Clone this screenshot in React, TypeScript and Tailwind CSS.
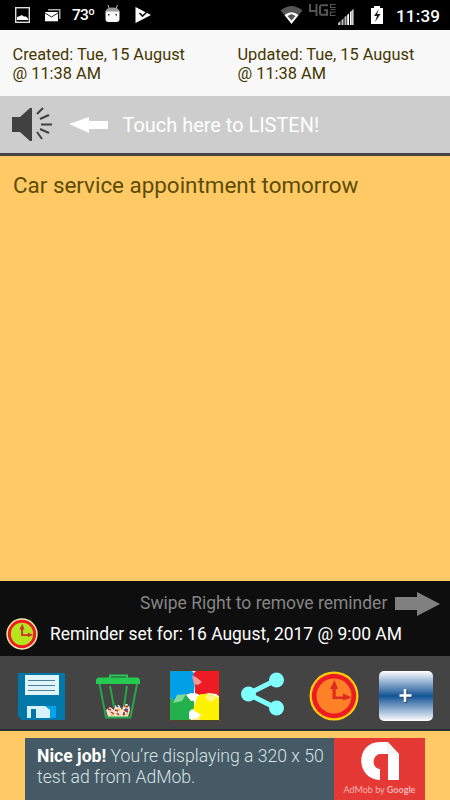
import type { ReactNode } from "react";

function StatusBar() {
  return (
    <header className="h-[30px] bg-black flex items-center text-white">
      <svg className="ml-[14px]" width="48" height="30" viewBox="14 0 48 30" fill="none">
        <rect x="15.700" y="7.700" width="13.600" height="14.600" stroke="#ddd" strokeWidth="1.400" />
        <path d="M17 20v-3l3-1 1.500-1 2.500 1.500 2 0 2 2v1.500z" fill="#fff" />
        <path d="M48 9h12.500v10H59v-8.500H48z" fill="#aaa" />
        <path d="M45 12h13v9.300H45z" fill="#fff" />
        <path d="m45 13 6.500 4 6.500-4" stroke="#222" strokeWidth="1" />
      </svg>
      <span className="ml-[10px] pt-px w-[32px] text-[15.5px] leading-[29px] font-medium tracking-[-0.8px]">73º</span>
      <svg width="50" height="30" viewBox="104 0 50 30">
        <path d="m108 5 1.500 4m8-4-1.500 4" stroke="#bbb" strokeWidth="1" />
        <path d="M105.500 12q0-4.500 7-4.500t7 4.500z" fill="#999" />
        <path d="M105.500 11.500h14V19q0 3-3 3h-8q-3 0-3-3z" fill="#f8f8f8" />
        <path d="M108 14h1.500v1.500H108zm7.500 0h1.500v1.500h-1.500z" fill="#333" />
        <path d="m135.500 7 15.500 8-15.500 8z" fill="#fff" />
        <path d="m139.500 13 3 3 6.500-6" fill="none" stroke="#111" strokeWidth="1.700" />
      </svg>
      <svg className="ml-[126px]" width="108" height="30" viewBox="280 0 108 30">
        <path d="M280.500 10.500q11-9 22 0l-11 13z" fill="#555" />
        <path d="M284.500 15q7-5.500 14 0l-7 9z" fill="#fff" />
        <path d="m287.500 16 4-2 4 2-4 4.500z" fill="#555" />
        <path d="M310 4v7h7.500M316.500 4v12M328 5.200h-6.500q-1.500 0-1.500 1.500v6.500q0 1.500 1.500 1.500h5.500v-4.500h-3" fill="none" stroke="#555" strokeWidth="2" />
        <path d="M330.500 4v3.500h5M330.500 9.500h5M335.500 12h-5v3.500h5M330 4.500h5.500" fill="none" stroke="#555" strokeWidth="1.200" />
        <path d="M338 25v-2l2.500-2v4zm3.500 0v-5l2-1.500V25zm3 0v-8l2-1.500V25z" fill="#bbb" />
        <path d="M347.200 25V15l1.800-1.500V25zm2.800 0V12l1.700-1.500V25zm2.200 0V10l1.300-1v16z" fill="#fff" />
        <path d="M371 8h3V6h6v2h3v16h-12z" fill="#fff" />
        <path d="m379 9-5 7h3l-2 6 5.500-8H377z" fill="#111" />
      </svg>
      <span className="ml-[8px] pt-px text-[17px] font-medium leading-[30px] tracking-[0.2px]">11:39</span>
    </header>
  );
}

function ClockIcon({ size, rim, ring, face, hand }: { size: number; rim: string; ring: string; face: string; hand: string }) {
  return (
    <svg width={size} height={size} viewBox="0 0 50 50">
      <circle cx="25" cy="25" r="24.500" fill={rim} />
      <circle cx="25" cy="25" r="22.200" fill={ring} />
      <circle cx="25" cy="25" r="17.500" fill={face} />
      <path d="M23.500 28V18h-2.500L25.500 9l3.500 9h-2.300v7.500H34v-3l9 4-9 3V28z" fill={hand} />
    </svg>
  );
}

function SaveIcon() {
  return (
    <svg width="47" height="47" viewBox="0 0 47 47">
      <path d="M0 0h47v47H4l-4-4z" fill="#0277aa" />
      <path d="M7 2h34v20H7z" fill="#e0f4fc" />
      <path d="M10 7.500h27M10 12.500h27M10 17.500h27" stroke="#507f99" />
      <path d="M9 33h19l5 4v8H9z" fill="#d8f2fc" />
      <path d="M27 33h11v12h-6v-8z" fill="#03a4ee" />
      <path d="M13 36h5v9h-5z" fill="#0277aa" />
    </svg>
  );
}

function TrashIcon() {
  return (
    <svg width="44" height="46" viewBox="0 0 44 46" fill="none">
      <path d="M14 4V1.500h17V4" stroke="#25ca51" strokeWidth="2" />
      <path d="m10 36 4-3 4 3 1-5 4 0 3 5 2-6h5l1 6-2 7H12z" fill="#fbe0d0" />
      <path d="m12 35 3 1m4 0 3 1m-4 3-3-2m13-6 4 1m-4 3 4 2m-5 3 2-1m-8-1 2 2" stroke="#b22c22" strokeWidth="1.500" />
      <path d="m20 31 2 2m7 2 3 1m-5 3 2 0m4-9-1 2" stroke="#184c85" strokeWidth="1.700" />
      <path d="m15 42 2-2m5-5 2 1m4-5 2 1m0 8 2 0" stroke="#f1b82d" strokeWidth="1.500" />
      <path d="M3.500 10 10 43.500h24.500L41 10M14 12l4 21M31 12l-3 20" stroke="#24a849" strokeWidth="2" />
      <path d="M2 3.500h40l2 2V10H0V5.500z" fill="#25ca51" />
    </svg>
  );
}

function PaletteIcon() {
  return (
    <svg width="51" height="51" viewBox="0 0 51 51">
      <rect width="51" height="51" fill="#fff" />
      <path d="M0 0h24l2 10-1 13-8 2-4 3-7 3-6-4z" fill="#009fe6" />
      <path d="M24 0h27v27l-4-3-7-1-9 2-5-2V12z" fill="#ed1c24" />
      <path d="M0 27l6 4 10-7 9 6v12l-4 9H0z" fill="#22b14c" />
      <path d="m28 27 4-3 10 0 9 4v23H29l-5-11z" fill="#fff200" />
      <path d="m21 0 4 3 3-3z" fill="#dce9df" />
      <path d="m23 6 4 1 6 5-4 3-4-1z" fill="#f79693" />
      <path d="m8 25 9-1-4 7-9 2z" fill="#82d79b" />
      <path d="m17 25 5-2 6 3-1 5-5 0z" fill="#fff" />
      <path d="m36 27 5-4 7 4-5 5-5-2z" fill="#fff184" />
      <path d="m20 42 3-3 9 6-4 4h-8z" fill="#fff" />
      <path d="m23 49 8-1v3h-9z" fill="#fce897" />
      <path d="M.5.5h50v50H.5z" fill="none" stroke="#514526" />
    </svg>
  );
}

function ShareIcon() {
  return (
    <svg width="43" height="44" viewBox="0 0 43 44">
      <path d="m35 8-28 14 28 14" fill="none" stroke="#80ffff" strokeWidth="5" />
      <g fill="#80ffff"><circle cx="35.500" cy="8" r="7.500" /><circle cx="7.500" cy="22" r="7.500" /><circle cx="35.500" cy="36" r="7.500" /></g>
    </svg>
  );
}

function DateLabel({ label }: { label: string }) {
  return (
    <div className="flex-1 pl-[12.5px] pt-[15px] text-[16.35px] leading-[19px] text-[#443600]">
      {label}: Tue, 15 August<br />@ 11:38 AM
    </div>
  );
}

function ToolButton({ label, className, children }: { label: string; className: string; children: ReactNode }) {
  return <button aria-label={label} className={`shrink-0 ${className}`}>{children}</button>;
}

export default function App() {
  return (
    <main className="w-[450px] h-[800px] overflow-hidden flex flex-col bg-[#ffc966] font-['Roboto',sans-serif] whitespace-nowrap">
      <StatusBar />
      <section className="h-[66px] flex bg-[#f8f8f8]">
        <DateLabel label="Created" />
        <DateLabel label="Updated" />
      </section>
      <section className="h-[60px] flex items-center bg-[#cdcdcd] border-b-3 border-[#444]">
        <svg className="ml-3" width="98" height="36" viewBox="0 0 98 36">
          <path d="M0 10h8L18 1h2v33h-2L8 25H0z" fill="#414141" />
          <path d="m25 7 6-6M28 12l9-4M29 17.500h11M28 22l9 4M25 25l5 7" fill="none" stroke="#414141" strokeWidth="2" />
          <path d="m57 17 20-7v4h19v8H77v4z" fill="#fff" />
        </svg>
        <span className="ml-[12.5px] pt-[3px] text-[19.95px] text-white">Touch here to LISTEN!</span>
      </section>
      <section className="h-[425px] px-[13px] pt-[14px] text-[22.4px] leading-[30px] text-[#5c4c04]">
        Car service appointment tomorrow
      </section>
      <section className="h-[75px] bg-[#0e0e0e] pt-[7px]">
        <div className="flex items-center h-[31px] pl-[140px]">
          <span className="text-[17.5px] text-[#858585]">Swipe Right to remove reminder</span>
          <svg className="ml-auto mr-[10px]" width="45" height="24" viewBox="0 0 45 24">
            <path d="M0 5h22V0l23 12-23 12v-6H0z" fill="#808080" />
          </svg>
        </div>
        <div className="flex items-center h-[30px] pl-[6px]">
          <ClockIcon size={32} rim="#f5edaa" ring="#ed1c24" face="#b5e61d" hand="#c8382a" />
          <span className="ml-3 pt-px text-[17.45px] text-white">Reminder set for: 16 August, 2017 @ 9:00 AM</span>
        </div>
      </section>
      <nav className="h-[75px] flex items-start bg-[#444] border-b-2 border-[#2b3036]">
        <ToolButton label="Save" className="ml-[18px] mt-[17px]"><SaveIcon /></ToolButton>
        <ToolButton label="Delete" className="ml-[31px] mt-[18px]"><TrashIcon /></ToolButton>
        <ToolButton label="Color" className="ml-[29px] mt-[14px]"><PaletteIcon /></ToolButton>
        <ToolButton label="Share" className="ml-[21px] mt-[16px]"><ShareIcon /></ToolButton>
        <ToolButton label="Reminder" className="ml-[25px] mt-[15px]"><ClockIcon size={50} rim="#ffc90e" ring="#ed1c24" face="#ff8127" hand="#de2b20" /></ToolButton>
        <ToolButton label="Add" className="ml-5 mt-[15px]">
          <span className="flex items-center justify-center w-[54px] h-[50px] rounded-[5px] bg-linear-to-b from-white via-[#0b5596] to-white">
            <svg width="14" height="16" viewBox="0 0 14 16"><path d="M7 2v13M1.500 8.500h12" stroke="#264566" strokeWidth="2.500" /><path d="M6 1v13M.500 7.500h12" stroke="#fff" strokeWidth="2.500" /></svg>
          </span>
        </ToolButton>
      </nav>
      <section className="flex h-[62px] mt-[7px] ml-[25px] w-[400px] bg-[#455a64]">
        <p className="w-[309px] pl-3 pt-[8px] text-[17.6px] leading-[21px] font-light text-[#d8e1e5]">
          <strong className="font-bold text-white">Nice job!</strong> You’re displaying a 320 x 50<br />test ad from AdMob.
        </p>
        <div className="w-[91px] bg-[#e53935] flex flex-col items-center">
          <svg className="mt-1" width="38" height="39" viewBox="0 0 38 39">
            <path d="M27 0H19C-6 0-6 37 19 38V27c-9-1-8-14 0-15h8v26h11V12z" fill="#fff" />
            <path d="M26 12h12L26 0z" fill="#f4f4f4" />
          </svg>
          <span className="mt-[2px] font-['Lato',sans-serif] text-[9px] leading-[14px] text-[#f7b5b3]">AdMob by <span className="font-bold">Google</span></span>
        </div>
      </section>
    </main>
  );
}
